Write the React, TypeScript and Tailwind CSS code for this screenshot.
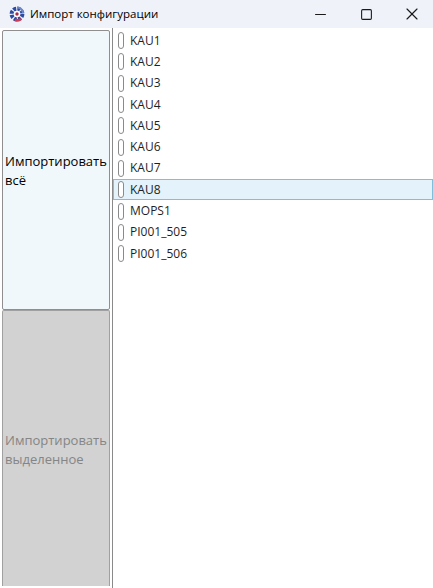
import { Minus, Square, X } from 'lucide-react';

const items = ['KAU1', 'KAU2', 'KAU3', 'KAU4', 'KAU5', 'KAU6', 'KAU7', 'KAU8', 'MOPS1', 'PI001_505', 'PI001_506'];

function AppIcon() {
    return (
        <svg width="16" height="16" viewBox="0 0 16 16">
            <circle cx="8" cy="8" r="5.4" fill="none" stroke="#2c4aa0" strokeWidth="4" strokeDasharray="3 1.2" />
            <path d="M8 1.5 A6.5 6.5 0 0 1 14.2 7" fill="none" stroke="#6f86c9" strokeWidth="2.2" />
            <path d="M12 13 A6 6 0 0 1 6 13.8" fill="none" stroke="#d23a52" strokeWidth="2.6" />
            <circle cx="8" cy="8" r="3" fill="#fff" />
            <circle cx="8" cy="8" r="1.7" fill="#a82a4b" />
        </svg>
    );
}

export default function App() {
    return (
        <div className="w-[433px] h-[588px] flex flex-col bg-white overflow-hidden font-['Open_Sans',sans-serif] text-[12px] text-[#1a1a1a]">
            <div className="h-[28px] shrink-0 flex items-center bg-[#eff2f9] pl-[9px]">
                <AppIcon />
                <span className="ml-[5px] flex-1 text-[11.5px] text-black">Импорт конфигурации</span>
                <div className="flex items-center text-[#1a1a1a]">
                    <div className="w-[41px] flex justify-center"><Minus size={17} strokeWidth={1.6} /></div>
                    <div className="w-[50px] flex justify-center"><Square size={13} strokeWidth={2} /></div>
                    <div className="w-[42px] flex justify-center"><X size={20} strokeWidth={1.4} /></div>
                </div>
            </div>

            <div className="flex-1 flex min-h-0">
                <div className="w-[113px] shrink-0 flex flex-col pl-[2px] pr-[2px] pt-[2px] pb-[2px] border-r border-[#8a8a8a]">
                    <button className="h-[280px] shrink-0 text-left px-[2px] pt-[2px] border border-[#8f8f8f] rounded-[2px] bg-[#f1f8fb] text-[13px] leading-[19px] text-black">
                        Импортировать всё
                    </button>
                    <button className="flex-1 text-left px-[2px] pt-[2px] border-t border-x border-[#a0a0a0] rounded-t-[2px] bg-[#d2d2d2] text-[13px] leading-[19px] text-[#858585]">
                        Импортировать выделенное
                    </button>
                </div>

                <ul className="flex-1 min-w-0 pt-[2px]">
                    {items.map(name => (
                        <li
                            key={name}
                            className={`h-[21.3px] flex items-center pl-[4px] border ${name === 'KAU8' ? 'bg-[#e3f2fb] border-[#7fbfdc]' : 'border-transparent'}`}
                        >
                            <span className="w-[6px] h-[17px] rounded-[3px] border border-[#8a8a8a] bg-white" />
                            <span className="ml-[6px] text-[#1f1f1f]">{name}</span>
                        </li>
                    ))}
                </ul>
            </div>
        </div>
    );
}
